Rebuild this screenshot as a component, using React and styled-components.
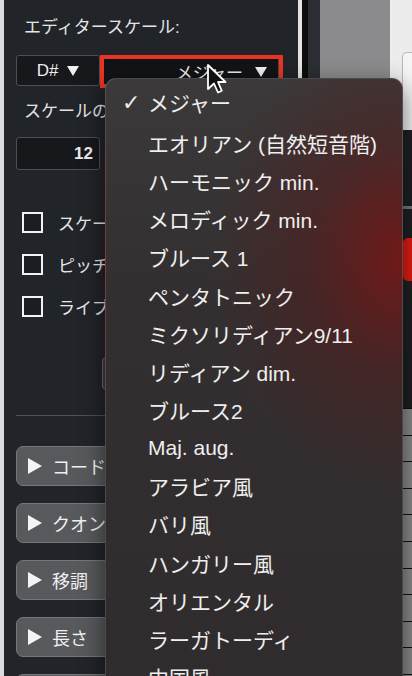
import React from "react";
import styled, { createGlobalStyle } from "styled-components";

const GlobalStyle = createGlobalStyle`
  html, body {
    margin: 0;
    padding: 0;
    background: #212428;
  }
  * {
    box-sizing: border-box;
  }
`;

const FONT = `"Liberation Sans", "Noto Sans CJK JP", sans-serif`;

// Whole window crop
const Screen = styled.div`
  position: relative;
  display: flex;
  width: 412px;
  height: 676px;
  overflow: hidden;
  font-family: ${FONT};
  color: #e6e6e6;
`;

const EdgeStrip = styled.div`
  width: 4px;
  background: #dcdcde;
`;

// Left inspector panel
const SidePanel = styled.div`
  width: 294px;
  background: #212428;
  padding: 18px 0 0 12px;
  display: flex;
  flex-direction: column;

  & > * {
    flex-shrink: 0;
  }
`;

const Label = styled.div`
  font-size: 17px;
  line-height: 20px;
  padding-left: 8px;
  margin-top: ${(p) => p.$top || 0}px;
  white-space: nowrap;
  color: #e4e4e4;
`;

const SelectRow = styled.div`
  display: flex;
  align-items: flex-start;
  margin-top: 17px;
`;

const Field = styled.div`
  width: 84px;
  height: ${(p) => p.$h || 31}px;
  margin-top: ${(p) => p.$top || 0}px;
  background: #16181b;
  border: 1px solid #4b4e53;
  border-radius: 3px;
  display: flex;
  align-items: center;
  justify-content: ${(p) => (p.$right ? "flex-end" : "center")};
  gap: 9px;
  padding-right: ${(p) => (p.$right ? 6 : 0)}px;
  font-size: 17px;
  font-weight: ${(p) => (p.$right ? 700 : 400)};
  color: #ececec;
`;

const Caret = styled.span`
  width: 0;
  height: 0;
  border-left: 6px solid transparent;
  border-right: 6px solid transparent;
  border-top: 10px solid #f0f0f0;
  margin-top: 1px;
`;

// red annotation frame around the scale selector
const Highlight = styled.div`
  width: 183px;
  height: 33px;
  border: 4px solid #ea3420;
`;

const ScaleSelect = styled.div`
  height: 100%;
  background: #121316;
  border-right: 1px solid #4a4a4a;
  display: flex;
  align-items: center;
  justify-content: flex-end;
  gap: 12px;
  padding-right: 11px;
  font-size: 17px;
  color: #ececec;
`;

const CheckList = styled.div`
  display: flex;
  flex-direction: column;
  gap: 22px;
  margin-top: 42px;
  padding-left: 6px;
`;

const CheckRow = styled.div`
  display: flex;
  align-items: center;
  gap: 15px;
  height: 20px;
  font-size: 17px;
  white-space: nowrap;
`;

const Box = styled.span`
  width: 21px;
  height: 21px;
  border: 2.5px solid #f2f2f2;
  background: #1c1d20;
  flex-shrink: 0;
`;

const SmallButton = styled.div`
  margin: 41px 0 0 86px;
  width: 80px;
  height: 33px;
  background: #3a3c40;
  border: 1px solid #6c6d70;
  border-radius: 4px;
`;

const Rule = styled.div`
  margin-top: 25px;
  height: 1px;
  background: #4e5156;
`;

const ButtonStack = styled.div`
  display: flex;
  flex-direction: column;
  gap: 17px;
  margin-top: 30px;
`;

const SectionButton = styled.div`
  width: 190px;
  height: 40px;
  flex-shrink: 0;
  background: #58595c;
  border: 1px solid #76777a;
  border-radius: 7px;
  display: flex;
  align-items: center;
  gap: 10px;
  padding-left: 11px;
  font-size: 18px;
  color: #f0f0f0;
  white-space: nowrap;
`;

const Play = styled.span`
  width: 0;
  height: 0;
  border-top: 8px solid transparent;
  border-bottom: 8px solid transparent;
  border-left: 14px solid #f4f4f4;
`;

// Columns to the right of the inspector
const Column = styled.div`
  width: ${(p) => p.$w}px;
  background: ${(p) => p.$bg};
  flex-shrink: 0;
`;

const RightColumn = styled.div`
  flex: 1;
  display: flex;
  flex-direction: column;

  & > * {
    flex-shrink: 0;
  }
`;

const LightArea = styled.div`
  height: 130px;
  background: #ececec;
  padding: 52px 0 0 12px;
  display: flex;
`;

const LightBox = styled.div`
  flex: 1;
  border: 1px solid #b8b8b8;
  border-right: none;
  border-bottom: none;
  border-radius: 5px 0 0 0;
  background: #f5f5f5;
`;

const DarkArea = styled.div`
  height: 278px;
  background: #1f2023;
  padding: 78px 0 0 13px;
  display: flex;
  flex-direction: column;
`;

const SeparatorLine = styled.div`
  height: 3px;
  background: #77787b;
  margin: -2px -13px 29px -13px;
`;

const RedButton = styled.div`
  height: 43px;
  background: #e41b14;
  border-radius: 5px 0 0 5px;
`;

const Lanes = styled.div`
  flex: 1;
  background: #8a8a8c;
  display: flex;
  flex-direction: column;
`;

const Lane = styled.div`
  height: 26.6px;
  flex-shrink: 0;
  border-top: 1.5px solid #121212;
`;

// Dropdown menu
const Menu = styled.div`
  position: absolute;
  left: 105px;
  top: 78px;
  width: 298px;
  height: 620px;
  border: 1px solid rgba(255, 255, 255, 0.14);
  border-radius: 11px 11px 0 0;
  background:
    radial-gradient(ellipse 190px 230px at 100% 29%, rgba(118, 22, 22, 0.9), rgba(90, 26, 26, 0.45) 50%, rgba(60, 30, 30, 0) 100%),
    linear-gradient(180deg, #3b3939 0%, #332f30 35%, #302c2d 100%);
  box-shadow: 0 8px 24px rgba(0, 0, 0, 0.55);
  padding-top: 4px;
  display: flex;
  flex-direction: column;
`;

const MenuItem = styled.div`
  height: ${(p) => (p.$selected ? 38 : 38.15)}px;
  flex-shrink: 0;
  margin-bottom: ${(p) => (p.$selected ? 3 : 0)}px;
  display: flex;
  align-items: center;
  padding-left: 16px;
  font-size: 21px;
  color: #efefef;
  white-space: nowrap;
`;

const Check = styled.span`
  width: 26px;
  font-size: 22px;
  font-weight: 700;
  font-family: "DejaVu Sans", sans-serif;
`;

const Cursor = styled.svg`
  position: absolute;
  left: 206px;
  top: 63px;
`;

const SCALES = [
  "メジャー",
  "エオリアン (自然短音階)",
  "ハーモニック min.",
  "メロディック min.",
  "ブルース 1",
  "ペンタトニック",
  "ミクソリディアン9/11",
  "リディアン dim.",
  "ブルース2",
  "Maj. aug.",
  "アラビア風",
  "バリ風",
  "ハンガリー風",
  "オリエンタル",
  "ラーガトーディ",
  "中国風",
];

const CHECKS = ["スケール表示", "ピッチ補正", "ライブ入力"];
const SECTIONS = ["コード", "クオンタイズ", "移調", "長さ", "その他"];

export default function App() {
  return (
    <>
      <GlobalStyle />
      <Screen>
        <EdgeStrip />
        <SidePanel>
          <Label>エディタースケール:</Label>
          <SelectRow>
            <Field>
              D# <Caret />
            </Field>
            <Highlight>
              <ScaleSelect>
                メジャー <Caret />
              </ScaleSelect>
            </Highlight>
          </SelectRow>
          <Label $top={14}>スケールのルート</Label>
          <Field $h={33} $top={15} $right>
            12
          </Field>
          <CheckList>
            {CHECKS.map((c) => (
              <CheckRow key={c}>
                <Box />
                {c}
              </CheckRow>
            ))}
          </CheckList>
          <SmallButton />
          <Rule />
          <ButtonStack>
            {SECTIONS.map((s) => (
              <SectionButton key={s}>
                <Play />
                {s}
              </SectionButton>
            ))}
          </ButtonStack>
        </SidePanel>
        <Column $w={4} $bg="#e4e4e4" />
        <Column $w={6} $bg="#0d0d0d" />
        <Column $w={12} $bg="#2b2e33" />
        <Column $w={70} $bg="#8b8b8d" />
        <RightColumn>
          <LightArea>
            <LightBox />
          </LightArea>
          <DarkArea>
            <SeparatorLine />
            <RedButton />
          </DarkArea>
          <Lanes>
            {Array.from({ length: 11 }).map((_, i) => (
              <Lane key={i} />
            ))}
          </Lanes>
        </RightColumn>

        <Menu>
          {SCALES.map((s, i) => (
            <MenuItem key={s} $selected={i === 0}>
              <Check>{i === 0 ? "✓" : ""}</Check>
              {s}
            </MenuItem>
          ))}
        </Menu>

        <Cursor width="22" height="34" viewBox="0 0 22 34">
          <path
            d="M2 2 L2 26 L8 20.5 L12 29.5 L15.8 27.8 L12 19 L19.5 19 Z"
            fill="#111"
            stroke="#fff"
            strokeWidth="1.8"
            strokeLinejoin="round"
          />
        </Cursor>
      </Screen>
    </>
  );
}
